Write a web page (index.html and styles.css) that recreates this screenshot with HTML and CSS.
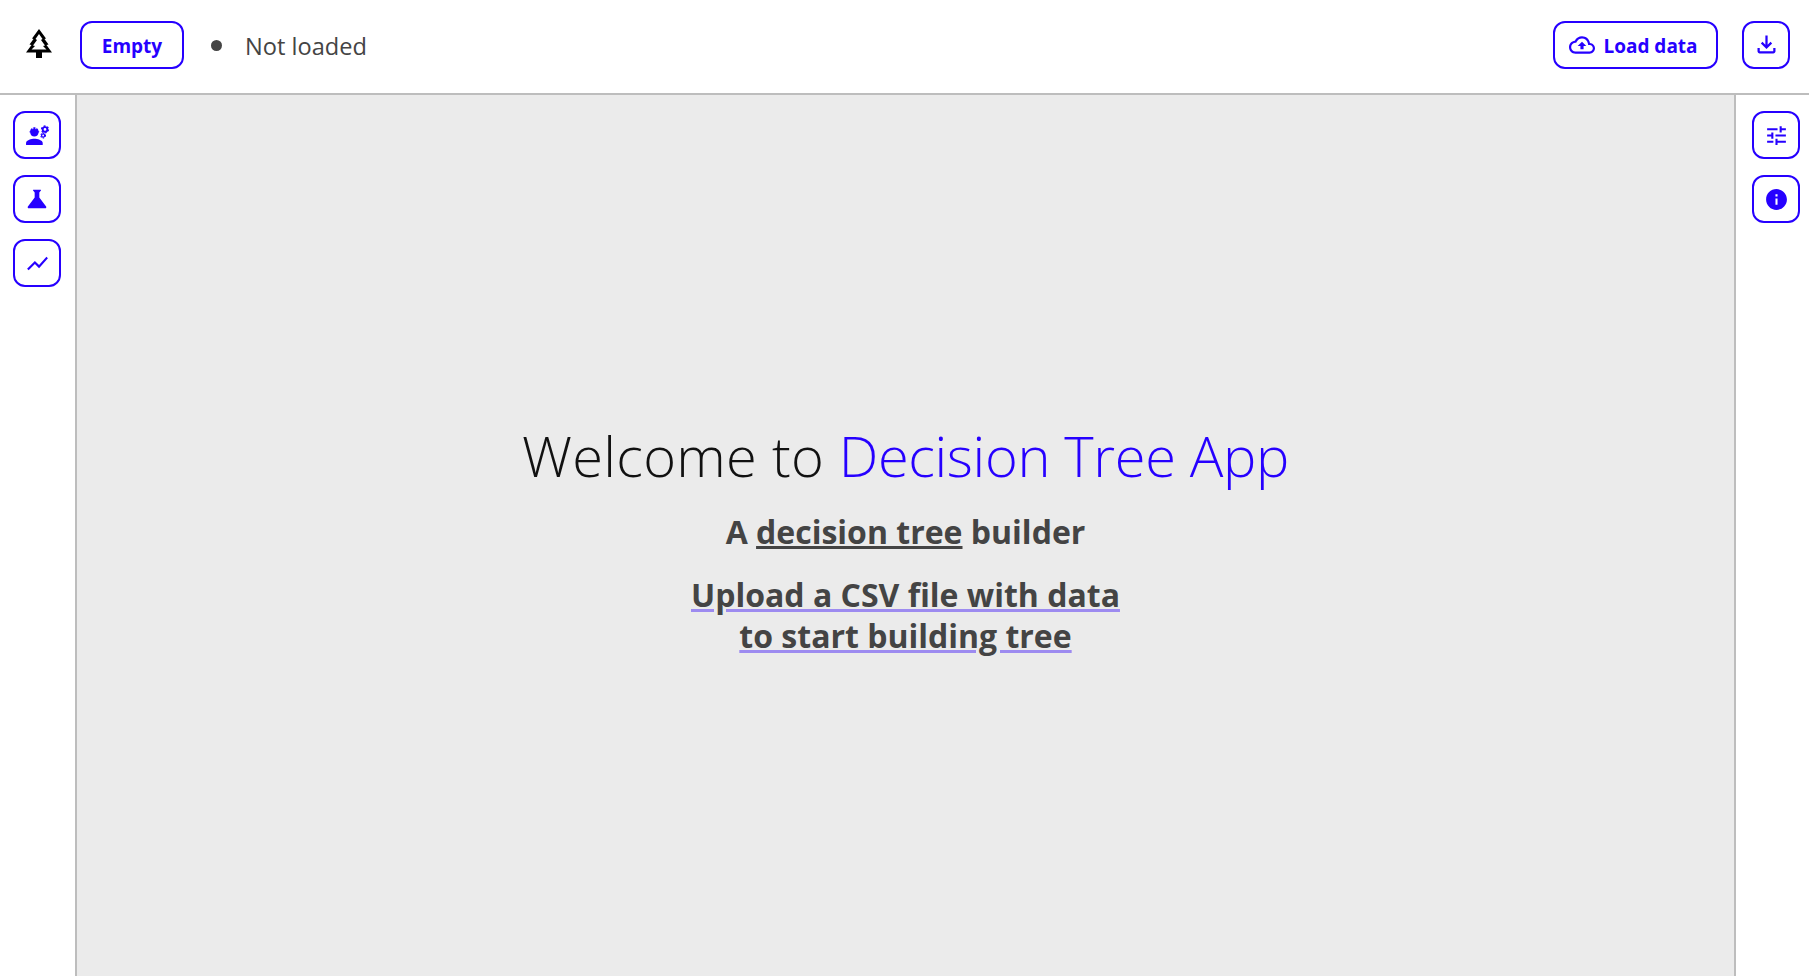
FILE: index.html
```html
<!DOCTYPE html>
<html lang="en">
<head>
    <meta charset="UTF-8">
    <meta name="viewport" content="width=device-width, initial-scale=1.0">
    <title>Decision Tree App</title>
    <link rel="stylesheet" href="styles.css">
</head>
<body>
    <header class="topbar">
        <svg class="logo" viewBox="0 0 26 29">
            <path fill-rule="evenodd" d="M13 0 L20 9.500 L18.500 10 L22.500 15.500 L20.500 16 L26 23.500 H16 V29 H10 V23.500 H0 L5.500 16 L3.500 15.500 L7.500 10 L6 9.500 Z M13 5 L9.500 10 L11 11 L7 16.500 L9 17 L5.500 20.500 H20.500 L17 17 L19 16.500 L15 11 L16.500 10 Z"/>
        </svg>
        <button class="btn btn-empty"><span class="btn-text">Empty</span></button>
        <span class="dot"></span>
        <span class="status">Not loaded</span>
        <div class="topbar-right">
            <button class="btn btn-load">
                <svg class="icon-cloud" viewBox="0 0 24 24"><path d="M19.35 10.04C18.67 6.59 15.64 4 12 4 9.11 4 6.6 5.64 5.35 8.04 2.34 8.36 0 10.91 0 14c0 3.31 2.69 6 6 6h13c2.76 0 5-2.24 5-5 0-2.64-2.05-4.78-4.65-4.96zM19 18H6c-2.21 0-4-1.79-4-4 0-2.05 1.53-3.76 3.56-3.97l1.07-.11.5-.95C8.08 7.14 9.94 6 12 6c2.62 0 4.88 1.86 5.39 4.43l.3 1.5 1.53.11c1.56.1 2.78 1.41 2.78 2.96 0 1.65-1.35 3-3 3zM8 13h2.55v3h2.9v-3H16l-4-4z"/></svg>
                <span class="btn-text">Load data</span>
            </button>
            <button class="btn btn-icon">
                <svg class="icon-download" viewBox="0 0 24 24"><path d="M18 15v3H6v-3H4v3c0 1.1.9 2 2 2h12c1.1 0 2-.9 2-2v-3h-2zm-1-4l-1.41-1.41L13 12.17V4h-2v8.17L8.41 9.59 7 11l5 5 5-5z"/></svg>
            </button>
        </div>
    </header>

    <div class="main">
        <aside class="sidebar sidebar-left">
            <button class="btn btn-icon">
                <svg class="icon-worker" viewBox="0 0 24 24">
                    <path d="M9 15c-2.67 0-8 1.34-8 4v2h16v-2c0-2.66-5.33-4-8-4z"/>
                    <path d="M4.74 9H5c0 2.21 1.79 4 4 4s4-1.79 4-4h.26c.27 0 .49-.22.49-.49v-.02c0-.27-.22-.49-.49-.49H13c0-1.48-.81-2.75-2-3.45v.95c0 .28-.22.5-.5.5s-.5-.22-.5-.5V4.14C9.68 4.06 9.35 4 9 4s-.68.06-1 .14v1.36c0 .28-.22.5-.5.5S7 5.78 7 5.5v-.95C5.81 5.25 5 6.52 5 8h-.26c-.27 0-.49.22-.49.49v.03c0 .26.22.48.49.48z"/>
                    <circle class="gear" cx="19.2" cy="6.2" r="2.2"/>
                    <circle class="gear-teeth" cx="19.2" cy="6.2" r="3.3"/>
                    <circle class="gear gear-small" cx="17.4" cy="12" r="1.500"/>
                    <circle class="gear-teeth gear-teeth-small" cx="17.4" cy="12" r="2.300"/>
                </svg>
            </button>
            <button class="btn btn-icon">
                <svg class="icon-flask" viewBox="0 0 24 24"><path d="M19.8 18.4L14 10.67V6.5l1.35-1.69c.26-.33.03-.81-.39-.81H9.04c-.42 0-.65.48-.39.81L10 6.5v4.17L4.2 18.4c-.49.66-.02 1.6.8 1.6h14c.82 0 1.29-.94.8-1.6z"/></svg>
            </button>
            <button class="btn btn-icon">
                <svg viewBox="0 0 24 24"><path d="M3.5 18.49l6-6.01 4 4L22 6.92l-1.41-1.41-7.09 7.97-4-4L2 16.99z"/></svg>
            </button>
        </aside>

        <main class="content">
            <h1 class="welcome"><span class="welcome-lead">Welcome to</span> <span class="accent">Decision Tree App</span></h1>
            <p class="subtitle">A <a href="#" class="link-dark">decision tree</a> builder</p>
            <p class="upload"><a href="#" class="link-upload">Upload a CSV file with data<br>to start building tree</a></p>
        </main>

        <aside class="sidebar sidebar-right">
            <button class="btn btn-icon">
                <svg viewBox="0 0 24 24"><path d="M3 17v2h6v-2H3zM3 5v2h10V5H3zm10 16v-2h8v-2h-8v-2h-2v6h2zM7 9v2H3v2h4v2h2V9H7zm14 4v-2H11v2h10zm-6-4h2V7h4V5h-4V3h-2v6z"/></svg>
            </button>
            <button class="btn btn-icon">
                <svg viewBox="0 0 24 24"><path d="M12 2C6.48 2 2 6.48 2 12s4.48 10 10 10 10-4.48 10-10S17.52 2 12 2zm1 15h-2v-6h2v6zm0-8h-2V7h2v2z"/></svg>
            </button>
        </aside>
    </div>
</body>
</html>
```

FILE: styles.css
```css
* {
    box-sizing: border-box;
}

body {
    margin: 0;
    height: 976px;
    display: flex;
    flex-direction: column;
    overflow: hidden;
    font-family: "Open Sans", "Noto Sans", sans-serif;
    color: #444;
    background: #fff;
}

.topbar {
    height: 95px;
    flex-shrink: 0;
    display: flex;
    align-items: center;
    padding: 0 19px 4px 26px;
    border-bottom: 2px solid #bdbdbd;
}

.logo {
    width: 26px;
    height: 29px;
    margin: 0 28px 2px 0;
}

.btn {
    height: 48px;
    display: flex;
    align-items: center;
    justify-content: center;
    background: #fff;
    border: 2px solid #2600ff;
    border-radius: 12px;
    color: #2600ff;
    font-family: inherit;
    font-size: 19px;
    font-weight: 700;
    padding: 0;
}

.btn-text {
    margin-top: 2px;
}

.btn svg {
    width: 25px;
    height: 25px;
    fill: #2600ff;
}

.btn-empty {
    width: 104px;
}

.btn-load {
    width: 165px;
    gap: 8px;
    padding-right: 4px;
}

.btn-load .icon-cloud {
    width: 26px;
    height: 26px;
}

.btn-icon {
    width: 48px;
}

.btn .icon-download {
    width: 27px;
    height: 27px;
}

.btn .icon-flask {
    width: 28px;
    height: 28px;
}

.gear {
    fill: none;
    stroke: #2600ff;
    stroke-width: 1.8;
}

.gear-teeth {
    fill: none;
    stroke: #2600ff;
    stroke-width: 1.3;
    stroke-dasharray: 1.73 1.73;
}

.gear-small {
    stroke-width: 1.3;
}

.gear-teeth-small {
    stroke-width: 1;
    stroke-dasharray: 1.2 1.2;
}

.dot {
    width: 11px;
    height: 11px;
    border-radius: 50%;
    background: #444;
    margin: 2px 23px 0 27px;
}

.status {
    font-size: 23.6px;
    margin-top: 2px;
}

.topbar-right {
    margin-left: auto;
    display: flex;
    gap: 24px;
}

.main {
    flex: 1;
    display: flex;
    min-height: 0;
}

.sidebar {
    display: flex;
    flex-direction: column;
    gap: 16px;
    padding-top: 16px;
}

.sidebar-left {
    width: 77px;
    padding-left: 13px;
    border-right: 2px solid #bdbdbd;
}

.sidebar-right {
    width: 75px;
    padding-left: 16px;
    border-left: 2px solid #bdbdbd;
}

.content {
    flex: 1;
    background: #ebebeb;
    text-align: center;
    padding-top: 326px;
}

.welcome {
    margin: 0;
    font-size: 56px;
    font-weight: 300;
    line-height: 68px;
    color: #111;
}

.welcome-lead {
    letter-spacing: 0.3px;
}

.accent {
    color: #2600ff;
    letter-spacing: -0.35px;
}

.subtitle,
.upload {
    margin: 0;
    font-size: 32px;
    font-weight: 700;
    line-height: 41px;
}

.subtitle {
    margin-top: 22px;
}

.upload {
    margin-top: 22px;
}

.link-dark {
    color: #444;
}

.link-upload {
    color: #444;
    text-decoration-color: #9d8bf0;
}
```
